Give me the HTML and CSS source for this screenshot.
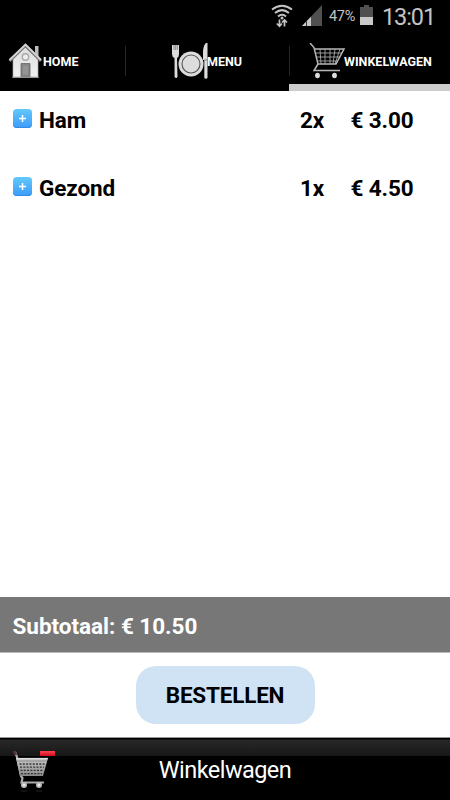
FILE: index.html
```html
<!DOCTYPE html>
<html lang="nl">
<head>
<meta charset="utf-8">
<title>Winkelwagen</title>
<link rel="stylesheet" href="styles.css">
</head>
<body>
<div class="app">
  <header class="status">
    <svg class="wifi" width="22" height="26" viewBox="0 0 22 26" fill="none" stroke="#c4c4c4" stroke-width="2">
      <path d="M1 5.500Q11-2 21 5.500M4 9Q11 3.200 18 9M7 12.500Q11 9 15 12.500"/>
      <circle cx="11" cy="14" r="1.500" fill="#c4c4c4" stroke="none"/>
      <path d="M8.500 15.500v6.500M5.800 19.500l2.700 2.700 2.400-2.700M13.500 22.500v-6.500M11 18.500l2.500-2.500 2.500 2.500" stroke-width="1.700"/>
    </svg>
    <svg class="signal" width="20" height="21" viewBox="0 0 20 21">
      <path d="M20 0v21H0z" fill="#505050"/>
      <path d="M4 16.800V21H0zM5 15.700l4-4V21H5z" fill="#c9c9c9"/>
      <path d="M4.500 15v6" stroke="#333" stroke-width=".7"/>
    </svg>
    <span class="percent">47%</span>
    <svg class="battery" width="13" height="20" viewBox="0 0 13 20">
      <path d="M4 0h5v2h4v18H0V2h4z" fill="#505050"/>
      <path d="M0 12h13v8H0z" fill="#c9c9c9"/>
    </svg>
    <span class="clock">13:01</span>
  </header>

  <nav class="tabs">
    <a class="tab tab-home">
      <svg width="36" height="36" viewBox="0 0 36 36">
        <defs><linearGradient id="wall" x2="0" y2="1"><stop stop-color="#ddd"/><stop offset="1" stop-color="#f1f1f1"/></linearGradient></defs>
        <path d="M27 3h3.500v10H27z" fill="#bbb"/>
        <path d="M5 16L17 4l13 12v18.500H5z" fill="url(#wall)" stroke="#aaa" stroke-width=".7"/>
        <path d="M1.500 18L17.500 2.500 33 18" fill="none" stroke="#777" stroke-width="3"/>
        <path d="M1.500 17L17.500 1.500 33 17" fill="none" stroke="#d4d4d4" stroke-width="1.900"/>
        <circle cx="17.500" cy="14" r="3.200" fill="#eee" stroke="#aaa" stroke-width="1.400"/>
        <path d="M13 20.500h9V34h-9z" fill="#858585" stroke="#666" stroke-width=".8"/>
        <path d="M15 22.500h5v9h-5z" fill="#949494"/>
        <path d="M4 34.200h27" stroke="#999"/>
      </svg>
      <span>HOME</span>
    </a>
    <a class="tab tab-menu">
      <svg width="36" height="36" viewBox="0 0 36 36">
        <g fill="#dcdcdc">
          <path d="M0 2h7v9q0 3-2 4l.5 19q-1.300 2-2.900 0L2.500 15Q0 14 0 11z"/>
          <path d="M34 0h1.500v35q-1.600 1.500-3.200 0V17H31V8q.5-6 3-8z"/>
          <circle cx="19" cy="21" r="12.500"/>
        </g>
        <path d="M2 2v5M3.700 2v5M5.300 2v5" stroke="#555" stroke-width=".6"/>
        <circle cx="19" cy="21" r="9" fill="#dcdcdc" stroke="#555" stroke-width="1.100"/>
        <path d="M32.300 17h3" stroke="#777"/>
      </svg>
      <span>MENU</span>
    </a>
    <a class="tab tab-cart">
      <svg width="36" height="36" viewBox="0 0 36 36">
        <g fill="none" stroke="#b8b8b8" stroke-width="1.500">
          <path d="M1 0l4 4.500L9 21 5 27.500h26M6 6h29l-8 15H9"/>
          <path d="M7 10h26M8 14h23M8.500 18h20M11 6l1 15M16 6v15M21 6v15M26 6l-2 15M31 6l-5 15" stroke-width=".8"/>
        </g>
        <ellipse cx="8.500" cy="32.500" rx="2.400" ry="2.700" fill="#ddd"/>
        <ellipse cx="25.500" cy="32.500" rx="2.400" ry="2.700" fill="#ddd"/>
      </svg>
      <span>WINKELWAGEN</span>
    </a>
  </nav>

  <main class="items">
    <div class="item">
      <span class="plus"><svg width="7" height="7" viewBox="0 0 7 7"><path d="M3.500 0v7M0 3.500h7" stroke="#fff" stroke-width="1.500"/></svg></span>
      <span class="name">Ham</span><span class="count">2x</span><span class="price">€ 3.00</span>
    </div>
    <div class="item">
      <span class="plus"><svg width="7" height="7" viewBox="0 0 7 7"><path d="M3.500 0v7M0 3.500h7" stroke="#fff" stroke-width="1.500"/></svg></span>
      <span class="name">Gezond</span><span class="count">1x</span><span class="price">€ 4.50</span>
    </div>
  </main>

  <div class="subtotal">Subtotaal: € 10.50</div>
  <div class="actions"><button class="order">BESTELLEN</button></div>

  <footer class="footer">
    <svg class="footer-cart" width="44" height="44" viewBox="0 0 44 44">
      <defs>
        <linearGradient id="metal" x2="0" y2="1"><stop stop-color="#ccc"/><stop offset="1" stop-color="#888"/></linearGradient>
        <linearGradient id="red" x2="0" y2="1"><stop stop-color="#ff4650"/><stop offset="1" stop-color="#c80d1b"/></linearGradient>
      </defs>
      <path d="M2 2l2 5 4 19 1.500 2-1 4.500H31" fill="none" stroke="#aaa" stroke-width="2.200"/>
      <path d="M1 1l2 4" stroke="#5b3438" stroke-width="2.500"/>
      <path d="M3 8h32l-5 18H7z" fill="url(#metal)"/>
      <path d="M6.500 14h26M7 17.200h24M7.500 20.400h23M8 23.600h21" stroke="#333" stroke-width="1.300" stroke-dasharray="2 1.300"/>
      <path d="M3 8.500h32" stroke="#ddd" stroke-width="1.200"/>
      <path d="M4 11h30" stroke="#888"/>
      <circle cx="11" cy="35" r="3" fill="#bbb"/><circle cx="11" cy="35" r="1.200" fill="#eee"/>
      <circle cx="26" cy="35" r="3" fill="#bbb"/><circle cx="26" cy="35" r="1.200" fill="#eee"/>
      <path d="M8 41h6M23 41h6" stroke="#222"/>
      <path d="M27 1h15v5H27z" fill="url(#red)"/>
    </svg>
    <span class="title">Winkelwagen</span>
  </footer>
</div>
</body>
</html>
```
FILE: styles.css
```css
* { box-sizing: border-box; }
body { margin: 0; background: #fff; font-family: Roboto, sans-serif; color: #000; }
.app { width: 450px; height: 800px; display: flex; flex-direction: column; overflow: hidden; }
svg { display: block; flex: none; }
span { white-space: nowrap; }

.status { height: 34px; background: #000; color: #c4c4c4; display: flex; align-items: flex-start; padding-left: 271px; flex: none; }
.wifi { margin-top: 4px; }
.signal { margin: 5px 0 0 9px; }
.percent { margin: 8px 0 0 7px; width: 27px; font-size: 14.500px; line-height: 18px; letter-spacing: -.3px; }
.battery { margin: 5px 0 0 4px; }
.clock { margin: 3px 0 0 9px; font-size: 23.500px; line-height: 28px; letter-spacing: -1.100px; }

.tabs { height: 57px; background: #000; color: #fff; display: grid; grid-template-columns: 125px 164px 161px; flex: none; }
.tab { display: flex; align-items: flex-start; padding-top: 9px; font-size: 12.500px; font-weight: 700; background: linear-gradient(#262626, #262626) no-repeat 0 12px / 1px 30px; }
.tab span { line-height: 18px; margin: 10px 0 0 -1px; }
.tab-home { padding-left: 8px; background: none; }
.tab-menu { padding-left: 47px; }
.tab-cart { padding-left: 20px; border-bottom: 7px solid #ccc; }

.items { flex: 1; padding: 16px 13px 0; }
.item { height: 68px; display: grid; grid-template-columns: 26px 261px 50.500px 1fr; align-items: start; font-size: 22.500px; font-weight: 700; line-height: 26px; letter-spacing: -.1px; }
.plus { width: 19px; height: 19px; margin-top: 2px; border-radius: 4px; background: linear-gradient(#62c9fb, #3d9bfa); box-shadow: inset 0 -1px #338ce5; display: flex; align-items: center; justify-content: center; }

.subtotal { height: 56px; flex: none; padding: 1px 12.500px 0; background: #777; border-bottom: 1px solid #bbb; color: #fff; font-size: 22.500px; font-weight: 700; line-height: 56px; letter-spacing: -.03px; }
.actions { height: 84px; flex: none; display: flex; justify-content: center; padding-top: 13px; }
.order { width: 179px; height: 58px; border: 0; border-radius: 20px; background: #cfe3f5; color: #000; font: 700 22.500px/58px Roboto, sans-serif; letter-spacing: -.2px; padding: 0; }

.footer { height: 63px; flex: none; border-top: 1px solid #999; background: linear-gradient(#000 1px, #282828 2px, #171717 18px, #000 18px); display: grid; grid-template-columns: 44px 1fr 44px; padding: 0 13px; color: #fff; font-size: 23.500px; }
.footer-cart { margin-top: 12px; }
.title { text-align: center; line-height: 28px; margin-top: 18px; letter-spacing: -.55px; }
```
